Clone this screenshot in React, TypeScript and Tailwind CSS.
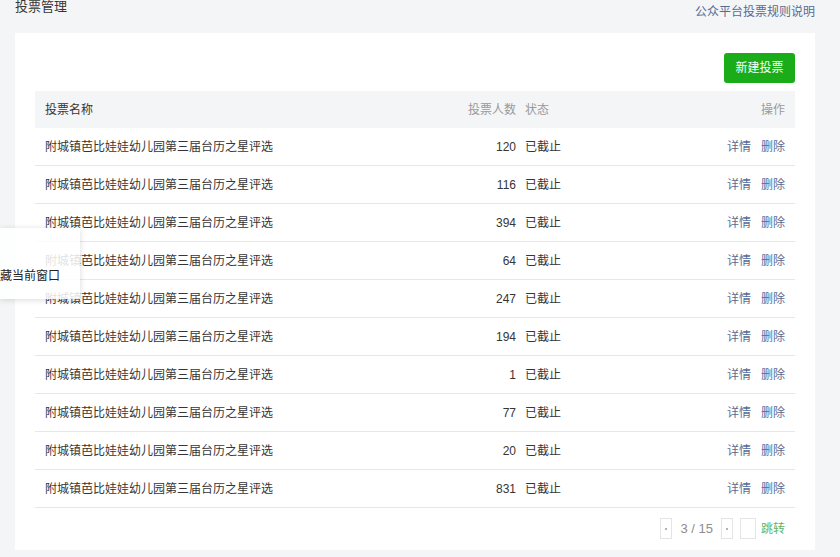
import React from "react";

const counts = [120, 116, 394, 64, 247, 194, 1, 77, 20, 831];
const name = "附城镇芭比娃娃幼儿园第三届台历之星评选";

export default function App() {
  return (
    <div
      className="relative w-[840px] h-[557px] overflow-hidden bg-[#f4f5f7] text-[#353535]"
      style={{ fontFamily: '"Liberation Sans", "Noto Sans CJK SC", sans-serif' }}
    >
      <div className="flex items-start justify-between pl-[15px] pr-[25px] h-[33px]">
        <div className="text-[13px] leading-[14px] mt-[0px] text-[#353535]">投票管理</div>
        <div className="text-[12px] leading-[14px] mt-[5px] text-[#576b95]">公众平台投票规则说明</div>
      </div>
      <div className="mx-[15px] w-[800px] h-[517px] bg-white px-[20px] pt-[20px]">
        <div className="flex justify-end">
          <button className="w-[71px] h-[30px] rounded-[3px] bg-[#1aad19] text-white text-[12px] leading-[30px]">
            新建投票
          </button>
        </div>
        <div className="mt-[8px] w-[760px] text-[12px]">
          <div className="flex items-center h-[37px] bg-[#f4f5f7] px-[10px] text-[#9a9a9a]">
            <div className="w-[400px] text-[#353535]">投票名称</div>
            <div className="w-[71px] text-right">投票人数</div>
            <div className="ml-[9px] flex-1">状态</div>
            <div className="text-right">操作</div>
          </div>
          {counts.map((c, i) => (
            <div key={i} className="flex items-center h-[38px] border-b border-[#e7e7eb] px-[10px]">
              <div className="w-[400px]">{name}</div>
              <div className="w-[71px] text-right">{c}</div>
              <div className="ml-[9px] flex-1">已截止</div>
              <div className="flex gap-[10px] text-[#576b95]">
                <span>详情</span>
                <span>删除</span>
              </div>
            </div>
          ))}
          <div className="flex items-center justify-end h-[41px] pr-[10px] text-[13px] text-[#8d8d8d]">
            <div className="w-[12px] h-[21px] border border-[#e4e4e4] flex items-center justify-center">
              <span className="w-[2px] h-[2px] rounded-full bg-[#999]" />
            </div>
            <div className="mx-[8px]">3 / 15</div>
            <div className="w-[12px] h-[21px] border border-[#e4e4e4] flex items-center justify-center">
              <span className="w-[2px] h-[2px] rounded-full bg-[#999]" />
            </div>
            <div className="ml-[7px] w-[16px] h-[21px] border border-[#e4e4e4]" />
            <div className="ml-[5px] text-[12px] text-[#5fb55f]">跳转</div>
          </div>
        </div>
      </div>
      <div className="absolute left-0 top-[228px] w-[80px] h-[71px] bg-white/85 shadow-[0_1px_6px_rgba(0,0,0,0.15)] overflow-hidden">
        <div className="absolute left-0 top-[41px] whitespace-nowrap text-[12px] leading-[14px] text-[#222]">
          藏当前窗口
        </div>
      </div>
    </div>
  );
}
